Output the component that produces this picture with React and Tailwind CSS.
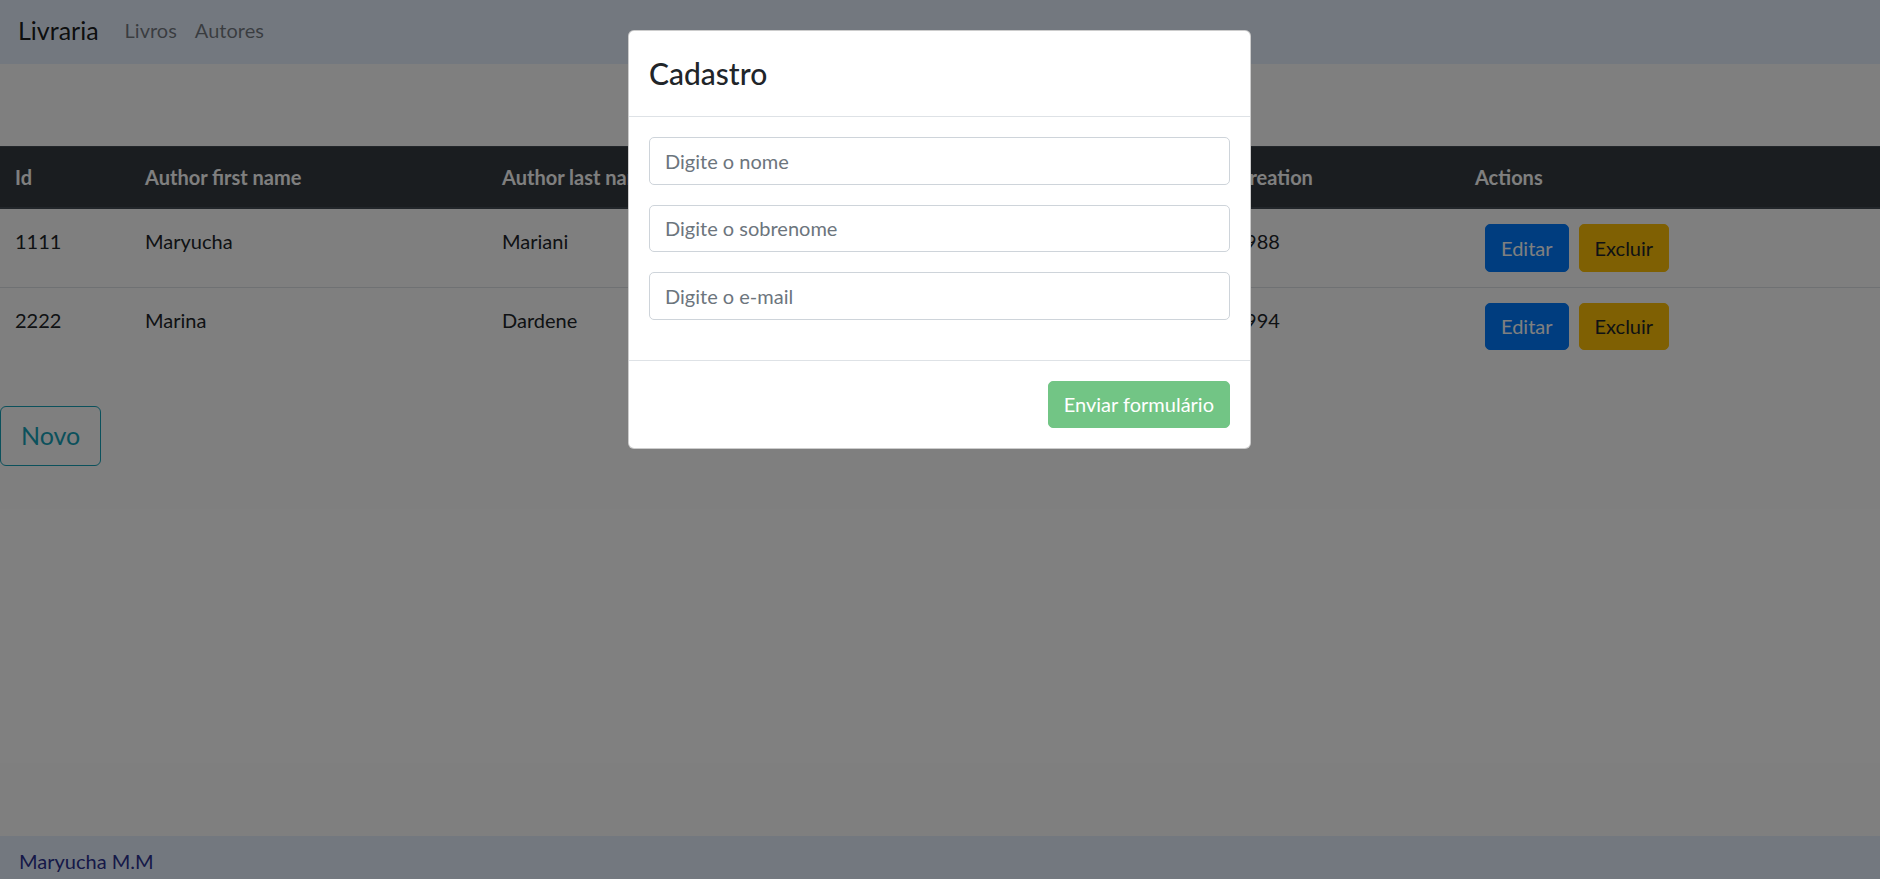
export default function App() {
  const rows = [
    { id: "1111", first: "Maryucha", last: "Mariani", email: "maryucha@email.com", date: "12/05/1988" },
    { id: "2222", first: "Marina", last: "Dardene", email: "marina@email.com", date: "03/09/1994" },
  ];
  return (
    <div className="relative flex h-[879px] flex-col overflow-hidden bg-white font-['Lato','Open_Sans',sans-serif] text-[20px] leading-[30px] text-[#212529]">
      <nav className="flex h-[64px] shrink-0 items-center bg-[#e6f0ff] px-[18px] pb-[4px]">
        <span className="mr-[17px] text-[25px] leading-[37px] text-black/90">Livraria</span>
        <a className="px-[9px] text-[20px] text-black/50">Livros</a>
        <a className="px-[9px] text-[20px] text-black/50">Autores</a>
      </nav>

      <main className="flex-1 pt-[82px]">
        <table className="w-full table-fixed border-collapse text-left">
          <colgroup>
            <col className="w-[130px]" />
            <col className="w-[357px]" />
            <col className="w-[350px]" />
            <col className="w-[317px]" />
            <col className="w-[306px]" />
            <col />
          </colgroup>
          <thead>
            <tr className="bg-[#343a40] text-white">
              <th className="border-t border-b-2 border-[#454d55] p-[15px] font-bold">Id</th>
              <th className="border-t border-b-2 border-[#454d55] p-[15px] font-bold">Author first name</th>
              <th className="border-t border-b-2 border-[#454d55] p-[15px] font-bold">Author last name</th>
              <th className="border-t border-b-2 border-[#454d55] p-[15px] font-bold">Author e-mail</th>
              <th className="border-t border-b-2 border-[#454d55] p-[15px] font-bold">Date of creation</th>
              <th className="border-t border-b-2 border-[#454d55] p-[15px] font-bold">Actions</th>
            </tr>
          </thead>
          <tbody>
            {rows.map((r) => (
              <tr key={r.id}>
                <td className="border-t border-[#dee2e6] px-[15px] pt-[17px] pb-[13px] align-top">{r.id}</td>
                <td className="border-t border-[#dee2e6] px-[15px] pt-[17px] pb-[13px] align-top">{r.first}</td>
                <td className="border-t border-[#dee2e6] px-[15px] pt-[17px] pb-[13px] align-top">{r.last}</td>
                <td className="border-t border-[#dee2e6] px-[15px] pt-[17px] pb-[13px] align-top">{r.email}</td>
                <td className="border-t border-[#dee2e6] px-[15px] pt-[17px] pb-[13px] align-top">{r.date}</td>
                <td className="border-t border-[#dee2e6] p-[15px] align-top">
                  <div className="flex">
                    <button className="ml-[10px] h-[47.5px] rounded-[5px] border border-[#007bff] bg-[#007bff] px-[15px] text-[20px] leading-[30px] text-white">
                      Editar
                    </button>
                    <button className="ml-[10px] h-[47.5px] rounded-[5px] border border-[#ffc107] bg-[#ffc107] px-[15px] text-[20px] leading-[30px] text-[#212529]">
                      Excluir
                    </button>
                  </div>
                </td>
              </tr>
            ))}
          </tbody>
        </table>

        <button className="mt-[41px] h-[59.5px] rounded-[6px] border border-[#17a2b8] bg-transparent px-[20px] text-[25px] leading-[37px] text-[#17a2b8]">
          Novo
        </button>
      </main>

      <footer className="h-[43px] shrink-0 bg-[#e6f0ff] px-[19px] pt-[10px]">
        <span className="text-[20px] leading-[30px] text-[#2c3290]">Maryucha M.M</span>
      </footer>

      <div className="absolute inset-0 bg-black/50" />

      <div className="absolute left-[628px] top-[30px] w-[623px] rounded-[6px] border border-black/20 bg-white">
        <div className="border-b border-[#dee2e6] p-[20px]">
          <h4 className="text-[30px] font-medium leading-[45px] text-[#212529]">Cadastro</h4>
        </div>
        <div className="p-[20px]">
          <div className="flex flex-col gap-[20px] pb-[20px]">
            <input
              placeholder="Digite o nome"
              className="h-[47.5px] w-full rounded-[5px] border border-[#ced4da] bg-white px-[15px] text-[20px] text-[#495057] outline-none placeholder:text-[#6c757d]"
            />
            <input
              placeholder="Digite o sobrenome"
              className="h-[47.5px] w-full rounded-[5px] border border-[#ced4da] bg-white px-[15px] text-[20px] text-[#495057] outline-none placeholder:text-[#6c757d]"
            />
            <input
              placeholder="Digite o e-mail"
              className="h-[47.5px] w-full rounded-[5px] border border-[#ced4da] bg-white px-[15px] text-[20px] text-[#495057] outline-none placeholder:text-[#6c757d]"
            />
          </div>
        </div>
        <div className="flex justify-end border-t border-[#dee2e6] p-[15px]">
          <button
            disabled
            className="m-[5px] h-[47.5px] rounded-[5px] border border-[#28a745] bg-[#28a745] px-[15px] text-[20px] leading-[30px] text-white opacity-65"
          >
            Enviar formulário
          </button>
        </div>
      </div>
    </div>
  );
}
